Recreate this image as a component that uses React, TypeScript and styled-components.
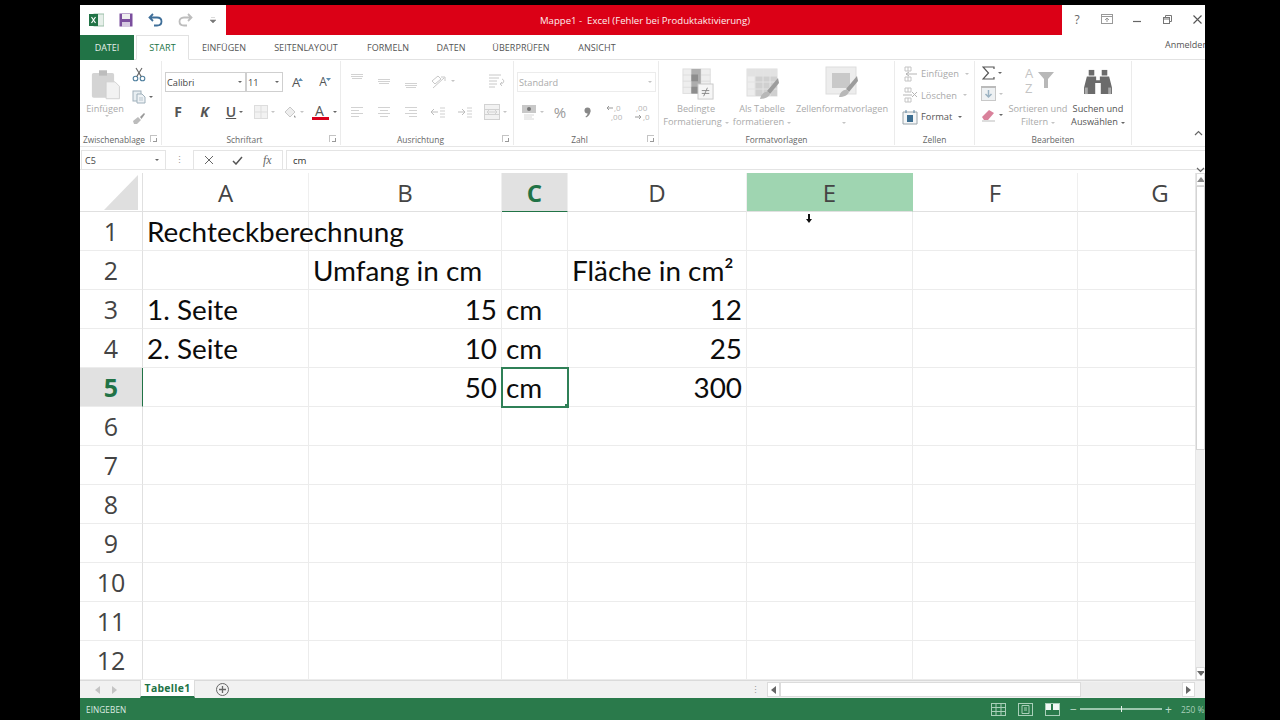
import React from "react";
import styled, { createGlobalStyle } from "styled-components";

const Global = createGlobalStyle`
  html, body { margin: 0; padding: 0; background: #000; height: 100%; overflow: hidden; }
  #root { height: 100%; }
  * { box-sizing: border-box; }
`;

const UI = `"Open Sans", "Noto Sans", sans-serif`;
const CELL = `Lato, "Open Sans", sans-serif`;

const Page = styled.div`
  width: 1280px; height: 720px; padding: 5px 75px 0 80px; background: #000;
`;
const Window = styled.div`
  width: 1125px; height: 715px; background: #fff; display: flex; flex-direction: column; overflow: hidden;
  font-family: ${UI};
`;
const TitleBar = styled.div`
  height: 30px; display: flex; align-items: stretch; flex: none;
`;
const Quick = styled.div`
  width: 146px; display: flex; align-items: center; flex: none; position: relative;
`;
const QuickSlot = styled.div<{ $w: number }>`
  width: ${p => p.$w}px; display: flex; justify-content: center; align-items: center; flex: none;
`;
const TitleRed = styled.div`
  flex: 1; background: #db0016; color: #fdeeee; font-size: 9.6px; display: flex; align-items: center; justify-content: center;
  padding-left: 2px; white-space: pre;
`;
const WinCtl = styled.div`
  width: 143px; flex: none; display: flex; align-items: center; padding-bottom: 2px;
`;
const WinSlot = styled.div`
  width: 30px; flex: none; display: flex; justify-content: center; align-items: center; color: #666; font-size: 12px;
`;
const TabRow = styled.div`
  height: 25px; flex: none; display: flex; align-items: stretch; border-bottom: 1px solid #e2e2e2; position: relative;
`;
const FileTab = styled.div`
  width: 54px; background: #217346; color: #e6f0ea; font-size: 9px; display: flex; align-items: center; justify-content: center;
  margin-bottom: -1px;
`;
const Tab = styled.div<{ $active?: boolean; $w: number }>`
  width: ${p => p.$w}px; flex: none; font-size: 9px; letter-spacing: 0.05px; display: flex; align-items: center; justify-content: center;
  color: ${p => (p.$active ? "#217346" : "#555")};
  background: #fff;
  ${p => p.$active ? "border: 1px solid #e2e2e2; border-bottom: 1px solid #fff; margin: 0 0 -1px 2px;" : ""}
`;
const SignIn = styled.div`
  position: absolute; right: -6px; top: 3px; font-size: 9px; color: #555; width: 46px; white-space: nowrap;
`;
const Ribbon = styled.div`
  height: 87px; flex: none; display: flex; position: relative; background: #fff; border-bottom: 1px solid #e6e6e6;
`;
const Group = styled.div<{ $w: number }>`
  width: ${p => p.$w}px; flex: none; height: 84px; margin-top: 1px; border-right: 1px solid #ebebeb;
  display: flex; flex-direction: column; position: relative;
`;
const GroupBody = styled.div`
  height: 71px; flex: none; display: flex;
`;
const GroupLabel = styled.div<{ $launcher?: boolean }>`
  flex: 1; font-size: 8.4px; color: #666; text-align: center; line-height: 12px; padding-top: 2px; white-space: nowrap;
  padding-right: ${p => (p.$launcher ? 13 : 0)}px;
`;
const Launcher = styled.div`
  position: absolute; right: 4px; bottom: 3px; width: 7px; height: 7px; border-left: 1px solid #c4c4c4; border-top: 1px solid #c4c4c4;
  &::after { content: ""; position: absolute; right: 0; bottom: 0; width: 3px; height: 3px; border-right: 1px solid #999; border-bottom: 1px solid #999; }
`;
const Col = styled.div<{ $w?: number; $pad?: number; $shift?: number }>`
  ${p => (p.$w ? `width: ${p.$w}px; flex: none;` : "")}
  display: flex; flex-direction: column; align-items: center; padding-top: ${p => p.$pad ?? 0}px;
  padding-left: ${p => p.$shift ?? 0}px;
`;
const Big = styled.div<{ $pb?: number; $shift?: number }>`
  height: 41px; padding-bottom: ${p => p.$pb ?? 2}px; padding-left: ${p => p.$shift ?? 0}px; display: flex; align-items: flex-end; justify-content: center; flex: none;
`;
const BigLabel = styled.div<{ $faded?: boolean }>`
  font-size: 9.2px; line-height: 13px; color: ${p => (p.$faded ? "#aaa" : "#555")}; text-align: center; white-space: nowrap;
`;
const Caret = styled.span<{ $faded?: boolean }>`
  display: inline-block; width: 0; height: 0; border-left: 2px solid transparent; border-right: 2px solid transparent;
  border-top: 2px solid ${p => (p.$faded ? "#c4c4c4" : "#666")}; vertical-align: middle; margin-left: 3px;
`;
const Rows = styled.div<{ $pad: number; $gap: number }>`
  display: flex; flex-direction: column; padding: ${p => p.$pad}px 0 0 0; gap: ${p => p.$gap}px;
`;
const Line = styled.div<{ $left?: number; $gap?: number; $h?: number }>`
  display: flex; align-items: center; height: ${p => p.$h ?? 20}px; padding-left: ${p => p.$left ?? 0}px; gap: ${p => p.$gap ?? 0}px;
`;
const Slot = styled.div<{ $w: number }>`
  width: ${p => p.$w}px; flex: none; display: flex; align-items: center; justify-content: center; position: relative;
`;
const Nudge = styled.span`
  position: absolute; right: 6px; top: 2px; display: flex;
`;
const Select = styled.div<{ $w: number; $faded?: boolean }>`
  width: ${p => p.$w}px; height: 20px; flex: none; border: 1px solid ${p => (p.$faded ? "#ececec" : "#cfcfcf")}; display: flex; align-items: center; justify-content: space-between;
  padding: 0 3px 0 1px; font-size: 9.2px; color: ${p => (p.$faded ? "#aaa" : "#444")};
`;
const CellStyleLine = styled.div<{ $faded?: boolean }>`
  height: 21.5px; display: flex; align-items: center; padding-left: 7px; gap: 3px; font-size: 9.3px; color: ${p => (p.$faded ? "#aaa" : "#555")};
`;
const Glyph = styled.span<{ $size: number; $weight?: number; $color?: string; $serif?: boolean; $italic?: boolean; $underline?: boolean }>`
  font-size: ${p => p.$size}px; font-weight: ${p => p.$weight ?? 400}; color: ${p => p.$color ?? "#555"};
  font-family: ${p => (p.$serif ? `"Liberation Serif", serif` : UI)}; line-height: 1;
  font-style: ${p => (p.$italic ? "italic" : "normal")};
  text-decoration: ${p => (p.$underline ? "underline" : "none")};
`;
const Collapse = styled.div`
  position: absolute; right: 2px; bottom: 5px;
`;
const Spacer = styled.div`
  height: 3px; flex: none; background: #fff;
`;
const FormulaBar = styled.div`
  height: 20px; flex: none; display: flex; align-items: stretch; border-bottom: 1px solid #e4e4e4; padding-left: 1px; position: relative;
`;
const NameBox = styled.div`
  width: 85px; flex: none; border: 1px solid #e4e4e4; border-bottom: none; font-size: 9px; color: #444; display: flex; align-items: center; justify-content: space-between;
  padding: 0 6px 0 3px;
`;
const Dots = styled.div`
  width: 27px; flex: none; display: flex; align-items: center; justify-content: center; color: #999; font-size: 9px;
`;
const FxBox = styled.div`
  width: 90px; flex: none; border: 1px solid #e4e4e4; border-bottom: none; display: flex; align-items: center;
`;
const FxSlot = styled.div`
  width: 30px; display: flex; align-items: center; justify-content: center;
`;
const FormulaInput = styled.div`
  flex: 1; margin-left: 3px; border-top: 1px solid #e4e4e4; border-left: 1px solid #e4e4e4; font-size: 9.6px; color: #333; display: flex; align-items: center; padding-left: 6px;
`;
const FormulaChevron = styled.div`
  position: absolute; right: 0; top: 6px;
`;
const GridArea = styled.div`
  margin-top: 3px; height: 507px; flex: none; display: flex; overflow: hidden; position: relative;
`;
const Sheet = styled.div`
  width: 1115px; flex: none; display: grid;
  grid-template-columns: 63px 166px 193px 66px 179px 166px 165px 165px;
  grid-template-rows: 39px repeat(12, 39px);
  font-family: ${CELL}; overflow: hidden;
`;
const ColHead = styled.div<{ $state?: "sel" | "hover" }>`
  display: flex; align-items: center; justify-content: center; font-family: "Open Sans", sans-serif; font-size: 24px; font-weight: ${p => (p.$state === "sel" ? 700 : 400)};
  color: ${p => (p.$state === "sel" ? "#217346" : "#444")};
  background: ${p => (p.$state === "sel" ? "#e1e1e1" : p.$state === "hover" ? "#9fd5b1" : "#fff")};
  border-bottom: 1px solid ${p => (p.$state === "sel" ? "#217346" : "#e0e0e0")};
  border-right: 1px solid ${p => (p.$state === "hover" ? "#9fd5b1" : "#efefef")};
`;
const Corner = styled.div`
  position: relative; background: #fff; border-bottom: 1px solid #e0e0e0; border-right: 1px solid #e0e0e0;
  &::after { content: ""; position: absolute; right: 4px; bottom: 1px; width: 34px; height: 35px; background: #dfdfdf; clip-path: polygon(100% 0, 100% 100%, 0 100%); }
`;
const RowHead = styled.div<{ $sel?: boolean }>`
  display: flex; align-items: center; justify-content: center; font-family: "Open Sans", sans-serif; font-size: 25px; font-weight: ${p => (p.$sel ? 700 : 400)};
  color: ${p => (p.$sel ? "#217346" : "#444")};
  background: ${p => (p.$sel ? "#e1e1e1" : "#fff")};
  border-right: 1px solid ${p => (p.$sel ? "#217346" : "#e0e0e0")};
  border-bottom: 1px solid #ececec;
`;
const Cell = styled.div<{ $right?: boolean; $active?: boolean }>`
  display: flex; align-items: center; justify-content: ${p => (p.$right ? "flex-end" : "flex-start")};
  padding: 0 4px; font-size: 27.9px; color: #0c0c0c; white-space: nowrap;
  border-right: 1px solid #ececec; border-bottom: 1px solid #ececec; position: relative;
  ${p => p.$active ? "outline: 2px solid #2f8057; outline-offset: -1px; z-index: 2;" : ""}
  ${p => p.$active ? `&::after { content: ""; position: absolute; right: -2px; bottom: -2px; width: 4px; height: 4px; background: #2f8057; }` : ""}
`;
const Cursor = styled.div`
  position: absolute; left: 726px; top: 41px; z-index: 3; transform: translateY(-8px);
`;
const VScroll = styled.div`
  width: 10px; flex: none; background: #f0f0f0; display: flex; flex-direction: column; border-left: 1px solid #e6e6e6;
`;
const ScrollBtn = styled.div<{ $w?: number }>`
  height: 13px; background: #fff; border: 1px solid #dcdcdc; display: flex; align-items: center; justify-content: center; flex: none;
  ${p => (p.$w ? `width: ${p.$w}px; height: 100%;` : "")}
`;
const VThumb = styled.div`
  height: 264px; background: #fff; border: 1px solid #d4d4d4; flex: none;
`;
const VTrack = styled.div`
  flex: 1;
`;
const TabsBar = styled.div`
  height: 18px; flex: none; display: flex; align-items: stretch; background: #f1f1f1; border-top: 1px solid #dadada; position: relative;
`;
const NavArrows = styled.div`
  width: 60px; flex: none; display: flex; align-items: center; justify-content: center; gap: 12px; padding-right: 8px;
`;
const SheetTab = styled.div`
  width: 55px; flex: none; background: #fff; color: #217346; font-weight: 700; font-size: 10.4px; letter-spacing: 0.3px;
  display: flex; align-items: center; justify-content: center; border-bottom: 2px solid #217346; border-left: 1px solid #dcdcdc; border-right: 1px solid #dcdcdc; margin-top: -1px;
`;
const AddSheet = styled.div`
  width: 55px; flex: none; display: flex; align-items: center; justify-content: center;
`;
const HDots = styled.div`
  margin-left: 493px; width: 24px; flex: none; display: flex; align-items: center; justify-content: center; color: #999; font-size: 9px;
`;
const HScroll = styled.div`
  width: 428px; flex: none; display: flex; align-items: stretch; padding: 1px 0;
`;
const HThumb = styled.div`
  width: 301px; flex: none; background: #fff; border: 1px solid #dcdcdc;
`;
const HTrack = styled.div`
  flex: 1; background: #ececec;
`;
const Status = styled.div`
  height: 22px; flex: none; background: #2a7a4b; display: flex; align-items: center; color: #dcebe2; font-size: 8.2px; padding-left: 6px; position: relative;
`;
const StatusText = styled.div`
  flex: 1; letter-spacing: 0.1px;
`;
const ViewSlot = styled.div`
  width: 27px; flex: none; display: flex; align-items: center; justify-content: center;
`;
const Zoom = styled.div`
  width: 115px; flex: none; display: flex; align-items: center; padding-left: 4px; gap: 3px; color: #bfdccb; font-size: 12px;
`;
const ZoomTrack = styled.div`
  width: 82px; height: 2px; background: #9cc7ae; position: relative; flex: none;
  &::after { content: ""; position: absolute; left: 41px; top: -2px; width: 1px; height: 6px; background: #e8f2ec; }
`;
const ZoomPct = styled.div`
  width: 24px; flex: none; font-size: 8.4px; color: #a9cfb9; white-space: nowrap;
`;

const Clipboard = () => (
  <svg width="32" height="31" viewBox="0 0 36 34">
    <rect x="1" y="4" width="25" height="28" rx="2" fill="#d4d4d4" />
    <rect x="9" y="1" width="9" height="6" fill="#bdbdbd" />
    <path d="M17 14h10l5 5v14H17z" fill="#f2f2f2" stroke="#cfcfcf" />
  </svg>
);
const Scissors = () => (
  <svg width="14" height="15" viewBox="0 0 14 15" fill="none" stroke="#4e7f9e" strokeWidth="1.1">
    <circle cx="3.5" cy="11.5" r="2.3" /><circle cx="10.5" cy="11.5" r="2.3" />
    <path d="M4.7 9.6 10 1M9.3 9.6 4 1" stroke="#666" />
  </svg>
);
const Copy = () => (
  <svg width="14" height="14" viewBox="0 0 14 14" fill="#e8eef2" stroke="#9fb0bb">
    <rect x="1" y="1" width="8" height="10" /><path d="M5 4h5l3 3v6H5z" fill="#eef2f5" />
    <path d="M7 8h4M7 10h4" stroke="#b9c6cf" />
  </svg>
);
const Brush = () => (
  <svg width="14" height="13" viewBox="0 0 14 13">
    <path d="M1 9l5-4 3 3-4 4H2z" fill="#bcbcbc" /><path d="M8 5l4-4 1 1-3.500 5z" fill="#9a9a9a" />
  </svg>
);
const Lines = ({ kind }: { kind: "l" | "c" | "r" }) => {
  const ws = [12, 8, 12, 8];
  return (
    <svg width="14" height="14" viewBox="0 0 14 14" stroke="#d2d2d2">
      {ws.map((w, i) => {
        const x = kind === "l" ? 1 : kind === "c" ? 7 - w / 2 : 13 - w;
        return <path key={i} d={`M${x} ${2.5 + i * 3}h${w}`} />;
      })}
    </svg>
  );
};
const VAlign = ({ pos }: { pos: number }) => (
  <svg width="14" height="14" viewBox="0 0 14 14" stroke="#d2d2d2">
    <path d={`M1 ${pos + .5}h12M1 ${pos + 2.5}h12M2 ${pos + 4.5}h10`} />
  </svg>
);
const Orient = () => (
  <svg width="18" height="15" viewBox="0 0 18 15" fill="none" stroke="#c8c8c8">
    <path d="M2 7l6-5 3 3-6 5zM3 14 14 4M11 3h4v4" />
  </svg>
);
const Wrap = () => (
  <svg width="17" height="14" viewBox="0 0 17 14" fill="none" stroke="#c8c8c8">
    <path d="M1 1h12M1 4h10M1 7h8M1 10h8M1 13h6M14 5c3 1 2 5-2 5M12 10l2-2M12 10l2 2" />
  </svg>
);
const Indent = ({ rtl }: { rtl?: boolean }) => (
  <svg width="16" height="12" viewBox="0 0 16 12" fill="none" stroke="#cfcfcf">
    {rtl ? <path d="M8 6H1M4 3 1 6l3 3" stroke="#bdbdbd" /> : <path d="M1 6h7M5 3l3 3-3 3" stroke="#bdbdbd" />}
    <path d="M10 2h5M10 5h5M10 8h5M10 11h5" />
  </svg>
);
const Merge = () => (
  <svg width="16" height="16" viewBox="0 0 16 16" fill="#f2f2f2" stroke="#d2d2d2">
    <rect x=".5" y=".5" width="15" height="15" />
    <path d="M.5 5.500h15M.5 10.500h15M3 8h10M3 8l2-2M3 8l2 2M13 8l-2-2M13 8l-2 2" fill="none" />
  </svg>
);
const Money = () => (
  <svg width="16" height="16" viewBox="0 0 16 16">
    <rect x="1" y="1" width="14" height="8" fill="#c8c8c8" /><circle cx="8" cy="5" r="2" fill="#777" />
    <path d="M3 11h10M3 13h8M3 15h10" stroke="#d8d8d8" />
  </svg>
);
const Comma = () => (
  <svg width="7" height="11" viewBox="0 0 7 11"><circle cx="3.500" cy="3.500" r="3" fill="#888" /><path d="M6.500 3.500C6.500 7 4.500 9.500 2 10.500L1.500 9.500C3 8.500 4 7 3.500 5z" fill="#888" /></svg>
);
const CondFormat = () => (
  <svg width="32" height="32" viewBox="0 0 34 34">
    <rect x="1" y="1" width="29" height="26" fill="#eee" stroke="#ddd" />
    <path d="M10 1v26M20 1v26M1 7.500h29M1 14h29M1 20.500h29" stroke="#ddd" />
    <rect x="10" y="1" width="10" height="26" fill="#adadad" />
    <path d="M10 7h7v7h-7zM10 20h8v7h-8z" fill="#8d8d8d" />
    <rect x="17" y="17" width="16" height="16" fill="#f6f6f6" stroke="#c8c8c8" />
    <path d="M21 24h8M21 27h8M27 21l-4 9" stroke="#888" fill="none" />
  </svg>
);
const TableFmt = ({ cell }: { cell?: boolean }) => (
  <svg width="34" height="32" viewBox="0 0 34 32">
    <rect x="1" y="1" width="30" height="27" fill="#ededed" stroke="#ddd" />
    {cell ? <rect x="7" y="7" width="18" height="15" fill="#c9c9c9" /> :
      <><rect x="1" y="1" width="30" height="7" fill="#e2e2e2" /><rect x="9" y="8" width="22" height="20" fill="#d0d0d0" /></>}
    {!cell && <path d="M9 1v27M17 1v27M24 1v27M1 8h30M1 14h30M1 21h30" stroke="#e3e3e3" />}
    <path d="M32 10 21 23l3 3L33 15z" fill="#9c9c9c" />
    <path d="M14 31c1-5 5-8 8-7l2 2c-1 3-5 5-10 5z" fill="#b8b8b8" />
  </svg>
);
const CellsIcon = ({ mode }: { mode: "ins" | "del" | "fmt" }) => (
  <svg width="16" height="16" viewBox="0 0 16 16" fill="none">
    {mode === "fmt" ? (
      <>
        <path d="M1 3h14v12H1z" stroke="#9aa4aa" fill="#f4f6f7" />
        <path d="M4 1v3M12 1v3" stroke="#5b86a6" />
        <rect x="5" y="6" width="6" height="7" fill="#3c6e91" />
      </>
    ) : (
      <>
        <path d="M3 1h6v4H3zM3 11h6v4H3zM6 1v4M6 11v4" stroke="#c4c4c4" />
        {mode === "ins" ? <path d="M15 8H4M7 6 4 8l3 2" stroke="#b5b5b5" /> : <path d="M10 5l5 5M15 5l-5 5M1 8h9" stroke="#b5b5b5" />}
      </>
    )}
  </svg>
);
const Sigma = () => (
  <svg width="13" height="14" viewBox="0 0 13 14" fill="none" stroke="#555" strokeWidth="1.200"><path d="M12 3V1H1l5.500 6L1 13h11v-2" /></svg>
);
const FillDown = () => (
  <svg width="15" height="15" viewBox="0 0 15 15">
    <rect x=".5" y=".5" width="14" height="14" fill="#eef1f3" stroke="#c8c8c8" />
    <rect y="0" width="15" height="2" fill="#bbb" />
    <path d="M7.500 4v7M4.500 8l3 3 3-3" stroke="#9ab2c2" fill="none" strokeWidth="1.500" />
  </svg>
);
const Eraser = () => (
  <svg width="15" height="13" viewBox="0 0 15 13">
    <path d="M1 8l7-7 5 3-6 7H3z" fill="#d9819b" /><path d="M1 12h13" stroke="#bbb" />
  </svg>
);
const Sort = () => (
  <svg width="30" height="28" viewBox="0 0 30 28" fontFamily="Open Sans" fontSize="13" fill="#c4c4c4" >
    <text x="0" y="12">A</text><text x="0" y="27">Z</text>
    <path d="M13 6h16l-6 7v9h-4v-9z" fill="#b8b8b8" />
  </svg>
);
const Binoculars = () => (
  <svg width="28" height="26" viewBox="0 0 30 28" fill="#6b6b6b">
    <rect x="5" y="1" width="6" height="6" /><rect x="19" y="1" width="6" height="6" />
    <path d="M3 8h10v4h4V8h10l3 12v7H18V15h-6v12H0v-7z" />
    <rect x="1" y="20" width="3" height="7" fill="#aaa" /><rect x="26" y="20" width="3" height="7" fill="#aaa" />
  </svg>
);
const Chev = ({ up, color = "#666" }: { up?: boolean; color?: string }) => (
  <svg width="9" height="6" viewBox="0 0 9 6" fill="none" stroke={color} strokeWidth="1.200"><path d={up ? "M1 5l3.500-3.500L8 5" : "M1 1l3.500 3.500L8 1"} /></svg>
);
const ViewIcon = ({ mode }: { mode: "grid" | "page" | "break" }) => (
  <svg width="15" height="13" viewBox="0 0 15 13" fill="none" stroke="#a9cfb9">
    <rect x=".5" y=".5" width="14" height="12" />
    {mode === "grid" && <path d="M5 0v13M10 0v13M0 4.500h15M0 8.500h15" />}
    {mode === "page" && <path d="M4 2.500h7v8H4zM6 5h3M6 7h3" />}
    {mode === "break" && <path d="M1 1h5v6H1zM8 1h6v6H8z" fill="#f2f7f4" stroke="none" />}
  </svg>
);
const Tri = ({ dir, color = "#777" }: { dir: "l" | "r" | "u" | "d"; color?: string }) => {
  const d = { l: "M5 0v8L0 4z", r: "M0 0v8l5-4z", u: "M0 5h8L4 0z", d: "M0 0h8L4 5z" }[dir];
  return <svg width={dir === "l" || dir === "r" ? 5 : 8} height={dir === "l" || dir === "r" ? 8 : 5}><path d={d} fill={color} /></svg>;
};
const TinyTri = ({ up }: { up?: boolean }) => (
  <svg width="5" height="3" viewBox="0 0 5 3"><path d={up ? "M0 3h5L2.500 0z" : "M0 0h5L2.500 3z"} fill="#5a8fb5" /></svg>
);

const cols = ["A", "B", "C", "D", "E", "F", "G"];
type C = { t?: string; r?: boolean };
const data: Record<number, C[]> = {
  1: [{ t: "Rechteckberechnung" }],
  2: [{}, { t: "Umfang in cm" }, {}, { t: "Fläche in cm²" }],
  3: [{ t: "1. Seite" }, { t: "15", r: true }, { t: "cm" }, { t: "12", r: true }],
  4: [{ t: "2. Seite" }, { t: "10", r: true }, { t: "cm" }, { t: "25", r: true }],
  5: [{}, { t: "50", r: true }, { t: "cm" }, { t: "300", r: true }],
};

const tabs: [string, number, boolean?][] = [
  ["START", 53, true], ["EINFÜGEN", 70], ["SEITENLAYOUT", 94], ["FORMELN", 70], ["DATEN", 56], ["ÜBERPRÜFEN", 84], ["ANSICHT", 68],
];

export default function App() {
  return (
    <Page>
      <Global />
      <Window>
        <TitleBar>
          <Quick>
            <QuickSlot $w={32}>
              <svg width="15" height="14" viewBox="0 0 15 14">
                <rect x="5" y="1" width="10" height="12" fill="#e6efe9" stroke="#9cbfa9" />
                <rect x="0" y="1" width="9" height="12" fill="#217346" />
                <path d="M2.500 4l4 6M6.500 4l-4 6" stroke="#fff" strokeWidth="1.200" />
              </svg>
            </QuickSlot>
            <QuickSlot $w={28}>
              <svg width="14" height="14" viewBox="0 0 14 14">
                <rect x=".5" y=".5" width="13" height="13" fill="#7b4f9e" />
                <rect x="3" y="1" width="8" height="5" fill="#eee" />
                <rect x="3" y="9" width="8" height="5" fill="#d5c9e0" />
              </svg>
            </QuickSlot>
            <QuickSlot $w={31}>
              <svg width="15" height="14" viewBox="0 0 15 14" fill="none" stroke="#3f6f99" strokeWidth="1.800">
                <path d="M5 1 1.500 4.500 5 8M2 4.500h7c6 0 6 8 0 8H6" />
              </svg>
            </QuickSlot>
            <QuickSlot $w={28}>
              <svg width="15" height="14" viewBox="0 0 15 14" fill="none" stroke="#bdbdbd" strokeWidth="1.800">
                <path d="M10 1l3.500 3.500L10 8M13 4.500H6c-6 0-6 8 0 8h3" />
              </svg>
            </QuickSlot>
            <QuickSlot $w={27}>
              <svg width="6" height="6" viewBox="0 0 6 6"><path d="M1 0h4M0 3h6L3 6z" stroke="#888" strokeWidth=".6" fill="#777" /></svg>
            </QuickSlot>
          </Quick>
          <TitleRed>{"Mappe1 -  Excel (Fehler bei Produktaktivierung)"}</TitleRed>
          <WinCtl>
            <WinSlot>?</WinSlot>
            <WinSlot>
              <svg width="12" height="10" viewBox="0 0 12 10" fill="none" stroke="#999"><rect x=".5" y=".5" width="11" height="9" /><path d="M0 2.500h12M6 8V4M4 6l2-2 2 2" /></svg>
            </WinSlot>
            <WinSlot>
              <svg width="8" height="8"><path d="M0 6.500h8" stroke="#666" strokeWidth="1.200" /></svg>
            </WinSlot>
            <WinSlot>
              <svg width="9" height="9" viewBox="0 0 9 9" fill="none" stroke="#777"><rect x=".5" y="2.500" width="6" height="6" /><path d="M2.500 2V.5h6v6H7M0 4h7" /></svg>
            </WinSlot>
            <WinSlot>
              <svg width="9" height="9" viewBox="0 0 9 9" stroke="#555" strokeWidth="1.100"><path d="M.5.5l8 8M8.500.5l-8 8" /></svg>
            </WinSlot>
          </WinCtl>
        </TitleBar>
        <TabRow>
          <FileTab>DATEI</FileTab>
          {tabs.map(([t, w, a]) => <Tab key={t} $w={w} $active={a}>{t}</Tab>)}
          <SignIn>Anmelden</SignIn>
        </TabRow>
        <Ribbon>
          <Group $w={82}>
            <GroupBody>
              <Col $w={50}>
                <Big $shift={4}><Clipboard /></Big>
                <BigLabel $faded>Einfügen</BigLabel>
                <Caret $faded />
              </Col>
              <Col $w={20} $shift={4}>
                <Rows $pad={6} $gap={8}>
                  <Scissors />
                  <Line $h={14}><Copy /><Caret /></Line>
                  <Brush />
                </Rows>
              </Col>
            </GroupBody>
            <GroupLabel $launcher>Zwischenablage</GroupLabel>
            <Launcher />
          </Group>
          <Group $w={179}>
            <GroupBody>
              <Rows $pad={11} $gap={10}>
                <Line $left={3}>
                  <Select $w={81}>Calibri<Caret /></Select>
                  <Select $w={37}>11<Caret /></Select>
                  <Slot $w={26}><Glyph $size={13}>A</Glyph><Nudge><TinyTri up /></Nudge></Slot>
                  <Slot $w={28}><Glyph $size={12}>A</Glyph><Nudge><TinyTri /></Nudge></Slot>
                </Line>
                <Line $left={3}>
                  <Slot $w={26}><Glyph $size={14} $weight={700}>F</Glyph></Slot>
                  <Slot $w={27}><Glyph $size={14} $weight={700} $italic>K</Glyph></Slot>
                  <Slot $w={33}><Glyph $size={14} $weight={600} $underline>U</Glyph><Caret /></Slot>
                  <Slot $w={27}>
                    <svg width="14" height="14" viewBox="0 0 14 14" stroke="#ddd" fill="#f2f2f2"><rect x=".5" y=".5" width="13" height="13" /><path d="M7 0v14M0 7h14" /></svg>
                    <Caret $faded />
                  </Slot>
                  <Slot $w={30}>
                    <svg width="14" height="14" viewBox="0 0 14 14"><path d="M2 7l5-5 5 5-5 5z" fill="#eee" stroke="#c8c8c8" /><path d="M11 10c1 1 2 2 1 3" stroke="#ddd" /></svg>
                    <Caret $faded />
                  </Slot>
                  <Slot $w={32}>
                    <svg width="18" height="18" viewBox="0 0 18 18"><text x="3" y="13" fontSize="14" fill="#555" fontFamily="Open Sans">A</text><rect x="0" y="14" width="17" height="3" fill="#d9001b" /></svg>
                    <Caret />
                  </Slot>
                </Line>
              </Rows>
            </GroupBody>
            <GroupLabel $launcher>Schriftart</GroupLabel>
            <Launcher />
          </Group>
          <Group $w={173}>
            <GroupBody>
              <Rows $pad={10} $gap={11}>
                <Line $left={2}>
                  <Slot $w={27}><VAlign pos={0} /></Slot>
                  <Slot $w={27}><VAlign pos={5} /></Slot>
                  <Slot $w={27}><VAlign pos={9} /></Slot>
                  <Slot $w={37}><Orient /><Caret $faded /></Slot>
                  <Slot $w={21} />
                  <Slot $w={29}><Wrap /></Slot>
                </Line>
                <Line $left={2}>
                  <Slot $w={27}><Lines kind="l" /></Slot>
                  <Slot $w={27}><Lines kind="c" /></Slot>
                  <Slot $w={27}><Lines kind="r" /></Slot>
                  <Slot $w={27}><Indent rtl /></Slot>
                  <Slot $w={27}><Indent /></Slot>
                  <Slot $w={34}><Merge /><Caret $faded /></Slot>
                </Line>
              </Rows>
            </GroupBody>
            <GroupLabel $launcher>Ausrichtung</GroupLabel>
            <Launcher />
          </Group>
          <Group $w={145}>
            <GroupBody>
              <Rows $pad={11} $gap={10}>
                <Line $left={3}><Select $w={139} $faded>Standard<Caret $faded /></Select></Line>
                <Line $left={5}>
                  <Slot $w={27}><Money /><Caret $faded /></Slot>
                  <Slot $w={28}><Glyph $size={15} $color="#999">%</Glyph></Slot>
                  <Slot $w={27}><Comma /></Slot>
                  <Slot $w={28}>
                    <svg width="18" height="18" viewBox="0 0 18 18" fontFamily="Open Sans" fontSize="8" fill="#b5b5b5"><text x="8" y="8">,0</text><text x="5" y="17">,00</text><path d="M1 5h6M3 3 1 5l2 2" stroke="#999" fill="none" /></svg>
                  </Slot>
                  <Slot $w={25}>
                    <svg width="18" height="18" viewBox="0 0 18 18" fontFamily="Open Sans" fontSize="8" fill="#b5b5b5"><text x="3" y="8">,00</text><text x="10" y="17">,0</text><path d="M2 14h6M6 12l2 2-2 2" stroke="#999" fill="none" /></svg>
                  </Slot>
                </Line>
              </Rows>
            </GroupBody>
            <GroupLabel $launcher>Zahl</GroupLabel>
            <Launcher />
          </Group>
          <Group $w={236}>
            <GroupBody>
              <Col $w={74}>
                <Big $shift={4}><CondFormat /></Big>
                <BigLabel $faded>Bedingte<br />Formatierung<Caret $faded /></BigLabel>
              </Col>
              <Col $w={58}>
                <Big $shift={2}><TableFmt /></Big>
                <BigLabel $faded>Als Tabelle<br />formatieren<Caret $faded /></BigLabel>
              </Col>
              <Col $w={102}>
                <Big $pb={4}><TableFmt cell /></Big>
                <BigLabel $faded>Zellenformatvorlagen<br /><Caret $faded /></BigLabel>
              </Col>
            </GroupBody>
            <GroupLabel>Formatvorlagen</GroupLabel>
          </Group>
          <Group $w={80}>
            <GroupBody>
              <Rows $pad={2} $gap={0}>
                <CellStyleLine $faded><CellsIcon mode="ins" />Einfügen<Caret $faded /></CellStyleLine>
                <CellStyleLine $faded><CellsIcon mode="del" />Löschen<Caret $faded /></CellStyleLine>
                <CellStyleLine><CellsIcon mode="fmt" />Format<Caret /></CellStyleLine>
              </Rows>
            </GroupBody>
            <GroupLabel>Zellen</GroupLabel>
          </Group>
          <Group $w={157}>
            <GroupBody>
              <Col $w={33} $pad={1}>
                <Line $h={21}><Sigma /><Caret /></Line>
                <Line $h={21}><FillDown /><Caret $faded /></Line>
                <Line $h={22}><Eraser /><Caret /></Line>
              </Col>
              <Col $w={60}>
                <Big $pb={8} $shift={3}><Sort /></Big>
                <BigLabel $faded>Sortieren und<br />Filtern<Caret $faded /></BigLabel>
              </Col>
              <Col $w={60}>
                <Big $pb={7}><Binoculars /></Big>
                <BigLabel>Suchen und<br />Auswählen<Caret /></BigLabel>
              </Col>
            </GroupBody>
            <GroupLabel>Bearbeiten</GroupLabel>
          </Group>
          <Collapse><Chev up /></Collapse>
        </Ribbon>
        <Spacer />
        <FormulaBar>
          <NameBox>C5<Caret /></NameBox>
          <Dots>⋮</Dots>
          <FxBox>
            <FxSlot><svg width="10" height="10" stroke="#666"><path d="M1 1l8 8M9 1l-8 8" /></svg></FxSlot>
            <FxSlot><svg width="11" height="9" fill="none" stroke="#555" strokeWidth="1.500"><path d="M1 5l3 3 6-7" /></svg></FxSlot>
            <FxSlot><Glyph $size={12} $serif $italic $color="#666">fx</Glyph></FxSlot>
          </FxBox>
          <FormulaInput>cm</FormulaInput>
          <FormulaChevron><Chev /></FormulaChevron>
        </FormulaBar>
        <GridArea>
          <Sheet>
            <Corner />
            {cols.map(c => <ColHead key={c} $state={c === "C" ? "sel" : c === "E" ? "hover" : undefined}>{c}</ColHead>)}
            {Array.from({ length: 12 }, (_, i) => i + 1).map(r => (
              <React.Fragment key={r}>
                <RowHead $sel={r === 5}>{r}</RowHead>
                {cols.map((c, ci) => {
                  const v = data[r]?.[ci] ?? {};
                  return <Cell key={c} $right={v.r} $active={r === 5 && c === "C"}>{v.t}</Cell>;
                })}
              </React.Fragment>
            ))}
          </Sheet>
          <Cursor>
            <svg width="6" height="9" viewBox="0 0 6 9"><path d="M2 0h2v5h2L3 9 0 5h2z" fill="#111" /></svg>
          </Cursor>
          <VScroll>
            <ScrollBtn><Tri dir="u" color="#888" /></ScrollBtn>
            <VThumb />
            <VTrack />
            <ScrollBtn><Tri dir="d" color="#666" /></ScrollBtn>
          </VScroll>
        </GridArea>
        <TabsBar>
          <NavArrows><Tri dir="l" color="#c4c4c4" /><Tri dir="r" color="#c4c4c4" /></NavArrows>
          <SheetTab>Tabelle1</SheetTab>
          <AddSheet>
            <svg width="13" height="13" viewBox="0 0 13 13" fill="none" stroke="#666"><circle cx="6.500" cy="6.500" r="6" /><path d="M3 6.500h7M6.500 3v7" strokeWidth="1.300" /></svg>
          </AddSheet>
          <HDots>⋮</HDots>
          <HScroll>
            <ScrollBtn $w={13}><Tri dir="l" color="#666" /></ScrollBtn>
            <HThumb />
            <HTrack />
            <ScrollBtn $w={13}><Tri dir="r" color="#666" /></ScrollBtn>
          </HScroll>
        </TabsBar>
        <Status>
          <StatusText>EINGEBEN</StatusText>
          <ViewSlot><ViewIcon mode="grid" /></ViewSlot>
          <ViewSlot><ViewIcon mode="page" /></ViewSlot>
          <ViewSlot><ViewIcon mode="break" /></ViewSlot>
          <Zoom>−<ZoomTrack />+</Zoom>
          <ZoomPct>250 %</ZoomPct>
        </Status>
      </Window>
    </Page>
  );
}
